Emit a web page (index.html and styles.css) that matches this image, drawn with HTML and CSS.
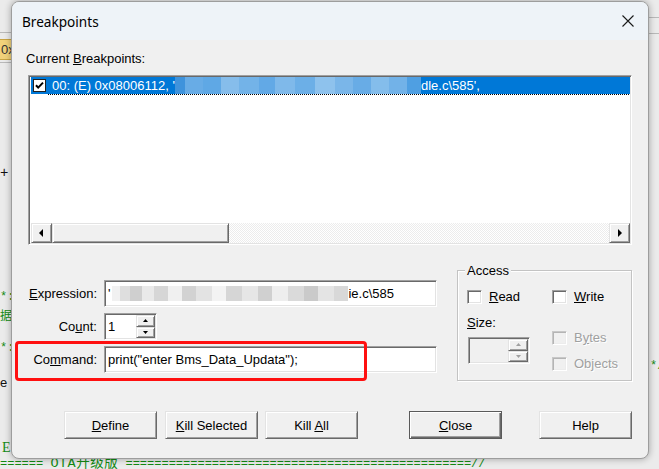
FILE: index.html
```html
<!DOCTYPE html>
<html>
<head>
<meta charset="utf-8">
<title>Breakpoints</title>
<link rel="stylesheet" href="styles.css">
</head>
<body>
<div class="ide">
  <div class="ide-line l1"></div>
  <div class="ide-hex">0x</div>
  <div class="ide-line l2"></div>
  <div class="ide-line r1"></div>
  <div class="ide-line r2"></div>
  <span class="code c-plus">+</span>
  <span class="code green c-star1">*:</span>
  <span class="code green c-ju">据</span>
  <span class="code green c-star2">*:</span>
  <span class="code c-e">e</span>
  <span class="code green c-E">E</span>
  <span class="code green c-starr">*/</span>
  <div class="code green c-bottom">====== <span class="ota">OTA升级版</span> ================================================//</div>
</div>

<div class="dialog">
  <div class="titlebar">
    <span class="title">Breakpoints</span>
    <svg class="close-x" width="12" height="12" viewBox="0 0 12 12"><path d="M0.5 0.5 L11.5 11.5 M11.5 0.5 L0.5 11.5" stroke="#1a1a1a" stroke-width="1.1" fill="none"/></svg>
  </div>
  <div class="body">
    <div class="cur-label">Current <u>B</u>reakpoints:</div>
    <div class="listbox">
      <div class="rows">
        <div class="row sel">
          <svg class="row-chk" width="13" height="13" viewBox="0 0 13 13"><rect x="0.5" y="0.5" width="12" height="12" fill="#fff" stroke="#222"/><path d="M3 6.2 L5.2 8.6 L10 3.6" stroke="#000" stroke-width="2" fill="none"/></svg>
          <span class="row-text">00: (E) 0x08006112, '<span class="blur-blue"></span>dle.c\585',</span>
        </div>
        <div class="focusline"></div>
      </div>
      <div class="hscroll">
        <div class="sbtn"><svg width="5" height="8" viewBox="0 0 5 8"><path d="M4 0 L0 4 L4 8 Z" fill="#000"/></svg></div>
        <div class="thumb"></div>
        <div class="track"></div>
        <div class="sbtn"><svg width="5" height="8" viewBox="0 0 5 8"><path d="M1 0 L5 4 L1 8 Z" fill="#000"/></svg></div>
      </div>
    </div>

    <div class="mid">
      <div class="form">
        <label class="flabel"><u>E</u>xpression:</label>
        <div class="field wide"><span class="ftext">'</span><span class="blur-grey"></span><span class="ftext">ie.c\585</span></div>
        <label class="flabel">Co<u>u</u>nt:</label>
        <div class="field count"><span class="ftext">1</span>
          <div class="spin">
            <div class="spin-btn"><svg width="5" height="3" viewBox="0 0 5 3"><path d="M2.5 0 L5 3 L0 3 Z" fill="#000"/></svg></div>
            <div class="spin-btn"><svg width="5" height="3" viewBox="0 0 5 3"><path d="M0 0 L5 0 L2.5 3 Z" fill="#000"/></svg></div>
          </div>
        </div>
        <label class="flabel">Co<u>m</u>mand:</label>
        <div class="field wide"><span class="ftext">print("enter Bms_Data_Updata");</span></div>
        <div class="redbox"></div>
      </div>

      <fieldset class="access">
        <legend>Access</legend>
        <div class="acc-row1">
          <div class="chk-item c1"><span class="cbox"></span><span><u>R</u>ead</span></div>
          <div class="chk-item"><span class="cbox"></span><span><u>W</u>rite</span></div>
        </div>
        <div class="acc-lower">
          <div class="acc-col1">
            <div class="size-lbl"><u>S</u>ize:</div>
            <div class="combo">
              <div class="spin dis">
                <div class="spin-btn"><svg width="5" height="3" viewBox="0 0 5 3"><path d="M2.5 0 L5 3 L0 3 Z" fill="#a0a0a0"/></svg></div>
                <div class="spin-btn"><svg width="5" height="3" viewBox="0 0 5 3"><path d="M0 0 L5 0 L2.5 3 Z" fill="#a0a0a0"/></svg></div>
              </div>
            </div>
          </div>
          <div class="acc-col2">
            <div class="chk-item dis bytes"><span class="cbox"></span><span>B<u>y</u>tes</span></div>
            <div class="chk-item dis objects"><span class="cbox"></span><span>Objects</span></div>
          </div>
        </div>
      </fieldset>
    </div>

    <div class="btns">
      <div class="btn"><span><u>D</u>efine</span></div>
      <div class="btn b-kill"><span><u>K</u>ill Selected</span></div>
      <div class="btn b-killall"><span>Kill <u>A</u>ll</span></div>
      <div class="btn default b-close"><span><u>C</u>lose</span></div>
      <div class="btn b-help"><span>Help</span></div>
    </div>
  </div>
</div>
</body>
</html>
```

FILE: styles.css
```css
* { box-sizing: border-box; }
html, body { margin: 0; padding: 0; }
body {
  width: 659px;
  height: 469px;
  overflow: hidden;
  position: relative;
  background: #ebebeb;
  font-family: "Liberation Sans", Arial, sans-serif;
  font-size: 13px;
  color: #000;
}
u { text-decoration: underline; text-underline-offset: 1px; }

/* ---------- IDE behind the dialog ---------- */
.ide { position: absolute; inset: 0; }
.ide-line { position: absolute; height: 1px; background: #b9b9b9; }
.ide-line.l1 { left: 0; top: 32px; width: 12px; }
.ide-line.l2 { left: 0; top: 62px; width: 12px; }
.ide-line.r1 { left: 648px; top: 17px; width: 11px; }
.ide-line.r2 { left: 648px; top: 33px; width: 11px; }
.ide-hex {
  position: absolute; left: 0; top: 39px; width: 12px; height: 21px;
  background: #f2d27a; border: 1px solid #c9a545; border-left: none;
  font-family: "Liberation Sans", Arial, sans-serif; font-size: 13px;
  line-height: 19px; color: #333; overflow: hidden; padding-left: 1px;
}
.code {
  position: absolute;
  font-family: "Liberation Mono", "Noto Sans CJK SC", monospace;
  font-size: 12px; line-height: 14px; color: #111; white-space: pre;
}
.green { color: #138a13; }
.c-plus { left: 0; top: 166px; font-size: 14px; }
.c-star1 { left: 0; top: 290px; }
.c-ju { left: 0; top: 308px; font-family: "Noto Sans CJK SC", sans-serif; font-size: 12px; }
.c-star2 { left: 0; top: 341px; }
.c-e { left: 0; top: 376px; font-family: "Liberation Sans", Arial, sans-serif; font-size: 13px; }
.c-E { left: 2px; top: 441px; font-family: "Liberation Serif", serif; font-size: 14px; }
.c-starr { left: 650px; top: 359px; }
.c-bottom { left: 0; top: 457px; }
.ota { font-family: "Liberation Mono", "Noto Sans CJK SC", monospace; font-size: 13.5px; letter-spacing: 0.5px; }

/* ---------- dialog window ---------- */
.dialog {
  position: absolute;
  left: 11px; top: 1px;
  width: 638px; height: 458px;
  border: 1px solid #9d9d9d;
  border-radius: 8px;
  background: #f0f0f0;
  box-shadow: 0 0 7px rgba(0, 0, 0, 0.32);
  overflow: hidden;
  display: flex;
  flex-direction: column;
}
.titlebar {
  height: 38px;
  flex: none;
  background: #eef3f8;
  display: flex;
  align-items: center;
  justify-content: space-between;
  padding: 0 14px 0 10px;
}
.title {
  font-family: "Noto Sans", "Open Sans", sans-serif;
  font-size: 13.6px;
  color: #000;
}
.close-x { display: block; }

.body {
  flex: 1;
  display: flex;
  flex-direction: column;
  align-items: flex-start;
}
.cur-label { margin: 11px 0 0 14px; line-height: 15px; }

/* sunken 3D border */
.listbox, .field, .combo, .cbox {
  border: 1px solid;
  border-color: #a0a0a0 #ffffff #ffffff #a0a0a0;
  box-shadow: inset 1px 1px 0 #696969, inset -1px -1px 0 #e3e3e3;
}
.listbox {
  margin: 9px 0 0 16px;
  width: 604px;
  height: 170px;
  background: #fff;
  padding: 1px;
  display: flex;
  flex-direction: column;
}
.rows { flex: 1; padding-left: 1px; }
.row.sel {
  height: 17px;
  background: #0078d7;
  color: #fff;
  display: flex;
  align-items: center;
}
.row-chk { margin-left: 2px; flex: none; }
.row-text { margin-left: 6px; white-space: pre; line-height: 15px; display: flex; align-items: center; }
.blur-blue {
  display: inline-block;
  width: 246px; height: 17px;
  background: linear-gradient(90deg,
    #3f93dc 0 10px, #68ace6 10px 28px, #5fa8e5 28px 46px, #86bdeb 46px 64px,
    #73b3e8 64px 84px, #62a9e6 84px 100px, #7fb9ea 100px 120px, #6cafe7 120px 140px,
    #8ec2ed 140px 160px, #7ab6e9 160px 178px, #68ace6 178px 196px, #84bdeb 196px 214px,
    #72b2e8 214px 232px, #4f9fe2 232px 246px);
}
.focusline {
  height: 1px;
  margin-left: 17px;
  background: repeating-linear-gradient(90deg, #000 0 1px, transparent 1px 2px);
}

/* raised 3D border */
.sbtn, .thumb, .spin-btn, .btn {
  border: 1px solid;
  border-color: #e3e3e3 #696969 #696969 #e3e3e3;
  box-shadow: inset 1px 1px 0 #ffffff, inset -1px -1px 0 #a0a0a0;
  background: #f0f0f0;
}
.hscroll { height: 20px; display: flex; padding-left: 1px; }
.sbtn {
  width: 21px; height: 20px; flex: none;
  display: flex; align-items: center; justify-content: center;
}
.sbtn svg { display: block; }
.thumb { width: 177px; height: 20px; flex: none; }
.track {
  flex: 1;
  background: repeating-conic-gradient(#ffffff 0 25%, #ececec 0 50%) 0 0 / 2px 2px;
}

/* ---------- form + access ---------- */
.mid { display: flex; margin: 18px 0 0 6px; }
.form {
  position: relative;
  width: 419px;
  padding-top: 17px;
  display: grid;
  grid-template-columns: 79px auto;
  column-gap: 7px;
  row-gap: 6px;
  align-items: center;
  align-content: start;
  justify-items: start;
}
.flabel { justify-self: end; line-height: 15px; }
.field {
  height: 27px;
  background: #fff;
  display: flex;
  align-items: center;
  padding: 0 2px 0 3px;
  white-space: pre;
}
.field.wide { width: 333px; }
.field.count { width: 53px; padding-right: 1px; }
.blur-grey {
  display: inline-block;
  width: 236px; height: 15px;
  margin-left: 2px;
  background: linear-gradient(90deg,
    #f1f1f1 0 8px, #dedede 8px 18px, #cfcfcf 18px 30px, #e9e9e9 30px 42px,
    #d6d6d6 42px 56px, #f0f0f0 56px 70px, #d2d2d2 70px 84px, #e3e3e3 84px 100px,
    #f3f3f3 100px 114px, #d6d6d6 114px 130px, #e6e6e6 130px 146px, #d0d0d0 146px 160px,
    #eeeeee 160px 176px, #dadada 176px 192px, #cacaca 192px 206px, #e4e4e4 206px 222px,
    #d8d8d8 222px 236px);
}
.spin {
  margin-left: auto;
  width: 19px;
  height: 23px;
  display: flex;
  flex-direction: column;
}
.spin-btn {
  flex: 1;
  display: flex; align-items: center; justify-content: center;
}
.spin-btn svg { display: block; }
.redbox {
  position: absolute;
  left: -3px; top: 78px;
  width: 352px; height: 40px;
  border: 3px solid #ff1010;
  border-radius: 4px;
  pointer-events: none;
}

.access {
  margin: 0 0 0 20px;
  width: 175px;
  height: 118px;
  padding: 0 0 0 7px;
  border: 1px solid #c3c3c3;
  box-shadow: inset 1px 1px 0 #ffffff, 1px 1px 0 #ffffff;
  min-width: 0;
}
.access legend {
  padding: 0 2px;
  line-height: 15px;
  background: #f0f0f0;
}
.acc-row1 { display: flex; margin: 11px 0 0 2px; }
.chk-item { display: flex; align-items: center; gap: 7px; height: 15px; line-height: 15px; }
.chk-item.c1 { width: 85px; }
.cbox { width: 15px; height: 14px; background: #fff; flex: none; }
.acc-lower { display: flex; margin-left: 2px; }
.acc-col1 { width: 85px; }
.size-lbl { margin-top: 11px; line-height: 15px; }
.combo {
  margin: 7px 0 0 1px;
  width: 62px; height: 27px;
  background: #f0f0f0;
  display: flex; align-items: center;
  padding-right: 1px;
}
.combo .spin { height: 23px; width: 20px; }
.chk-item.dis { color: #a0a0a0; text-shadow: 1px 1px 0 #fff; }
.chk-item.dis .cbox {
  background: #f0f0f0;
  border-color: #c8c8c8 #fff #fff #c8c8c8;
  box-shadow: inset 1px 1px 0 #b4b4b4, inset -1px -1px 0 #ececec;
}
.bytes { margin-top: 26px; }
.objects { margin-top: 11px; }

/* ---------- buttons ---------- */
.btns { display: flex; margin: 30px 0 0 52px; }
.btn {
  width: 93px; height: 28px;
  display: flex; align-items: center; justify-content: center;
  line-height: 15px;
}
.b-kill { margin-left: 8px; }
.b-killall { margin-left: 7px; }
.b-close { margin-left: 51px; }
.b-help { margin-left: 37px; }
.btn.default {
  border-color: #5a5a5a;
  box-shadow: inset 1px 1px 0 #ffffff, inset -1px -1px 0 #696969, inset -2px -2px 0 #a0a0a0;
}
```
